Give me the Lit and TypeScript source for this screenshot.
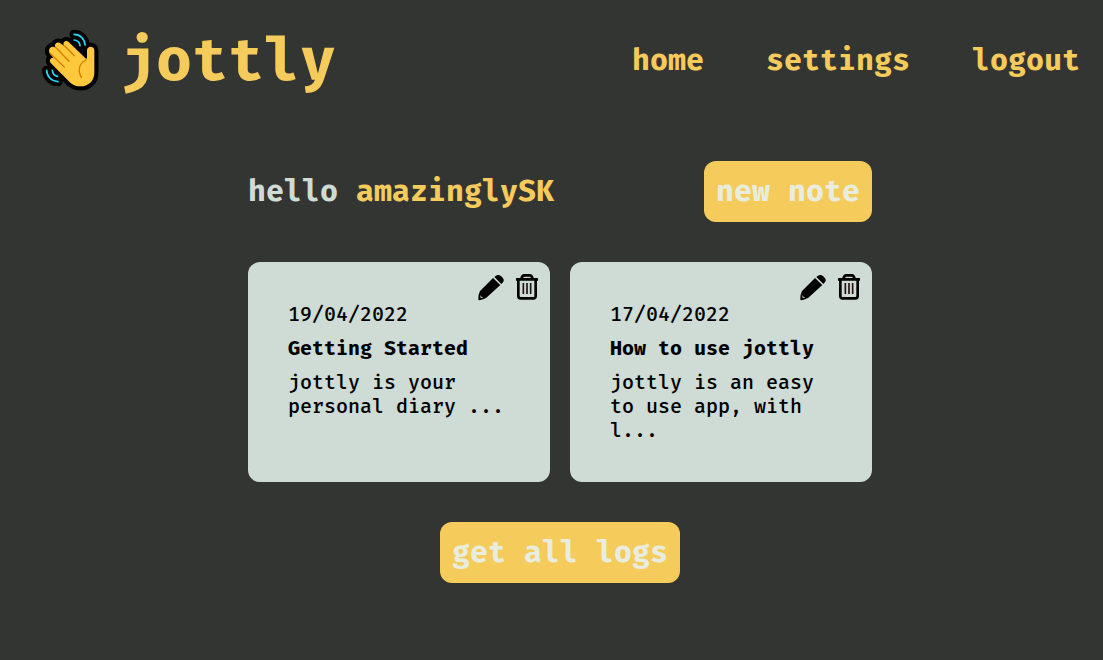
import { LitElement, html, css, svg } from "lit";
import { customElement, property } from "lit/decorators.js";

const handPath =
  "M168 116L116 66C107 58 95 69 103 78L93 71C82 62 69 73 78 84L74 82C63 76 53 89 59 99L70 113C60 112 57 123 63 130L121 188C129 195 139 199 152 199C177 199 193 181 193 158V91C193 77 171 77 171 91V115Z";
const upperArcs = "M132 43C150 43 164 56 165 75M133 60C142 61 149 67 150 77";
const lowerArcs = "M50 151C51 170 64 184 84 185M67 151C68 161 74 168 83 169";

const wave = svg`
  <g fill="none" stroke="#000" stroke-linecap="round" stroke-linejoin="round">
    <path d="${upperArcs}" stroke-width="28" />
    <path d="${lowerArcs}" stroke-width="28" />
    <path d="${handPath}" fill="#000" stroke-width="25" />
  </g>
  <path d="${handPath}" fill="#ffc83d" />
  <g fill="none" stroke-linecap="round">
    <path d="M104 78L133 107M79 84L117 124M60 100L103 141M168 120C150 128 141 148 154 172" stroke="#d67d00" stroke-width="4" />
    <path d="${upperArcs}" stroke="#26d9fc" stroke-width="5" />
    <path d="${lowerArcs}" stroke="#26d9fc" stroke-width="5" />
  </g>
`;

@customElement("note-card")
export class NoteCard extends LitElement {
  @property() date = "";
  @property() heading = "";
  @property() excerpt = "";

  static styles = css`
    :host { display: block; }
    .card {
      box-sizing: border-box;
      height: 100%;
      min-height: 220px;
      padding: 12px 12px 40px 40px;
      border-radius: 12px;
      background: #cfdbd5;
      color: #000;
      font-size: 20px;
      line-height: 24px;
    }
    .actions { display: flex; justify-content: flex-end; gap: 12px; height: 28px; }
    .action { padding: 0; border: 0; background: none; height: 26px; cursor: pointer; color: inherit; }
    .icon { display: block; overflow: visible; }
    .body { display: flex; flex-direction: column; gap: 10px; padding-right: 28px; }
    .heading, .excerpt { margin: 0; font-size: inherit; }
  `;

  render() {
    return html`
      <article class="card">
        <div class="actions">
          <button class="action" aria-label="Edit note">
            <svg class="icon" width="26" height="26" viewBox="24 27 78 78">
              <path d="M69 39L91 60L49 98Q41 103 28 106Q24 106 25 101Q25 88 30 78ZM73 36L78 32Q85 27 93 33Q103 42 101 48Q99 52 94 57Z" />
              <path d="M32 90L34 95L40 97L34 99L31 97Z" fill="#cfdbd5" />
            </svg>
          </button>
          <button class="action" aria-label="Delete note">
            <svg class="icon" width="22" height="26" viewBox="138 27 66 78" fill="none" stroke="currentColor" stroke-width="8">
              <path d="M138 43H204M154 42Q156 31 163 31H179Q186 31 188 42M145 43V93Q145 100 152 100H190Q197 100 197 93V43" />
              <path d="M160 54V87M171 54V87M182 54V87" stroke="#24110c" stroke-width="5" />
            </svg>
          </button>
        </div>
        <div class="body">
          <time>${this.date}</time>
          <h2 class="heading">${this.heading}</h2>
          <p class="excerpt">${this.excerpt}</p>
        </div>
      </article>
    `;
  }
}

@customElement("app-root")
export class AppRoot extends LitElement {
  private notes = [
    { date: "19/04/2022", heading: "Getting Started", excerpt: "jottly is your personal diary ..." },
    { date: "17/04/2022", heading: "How to use jottly", excerpt: "jottly is an easy to use app, with l..." },
  ];

  static styles = css`
    :host {
      display: block;
      box-sizing: border-box;
      min-height: 100vh;
      padding: 24px 23px 40px 40px;
      background: #333533;
      color: #cfdbd5;
      font-family: "Fira Mono", "DejaVu Sans Mono", monospace;
      font-size: 30px;
      line-height: 36px;
      font-weight: 700;
    }
    .header { display: flex; align-items: center; justify-content: space-between; }
    .brand { display: flex; align-items: center; gap: 20px; color: #f5cb5c; }
    .logo { display: block; overflow: visible; }
    .title { margin: 0; font-size: 60px; line-height: 72px; }
    .nav { display: flex; gap: 62px; }
    .link { color: #f5cb5c; text-decoration: none; }
    .main { width: 60%; margin: 65px auto 0; display: flex; flex-direction: column; gap: 40px; }
    .bar { display: flex; align-items: baseline; justify-content: space-between; }
    .greeting { margin: 0; font-size: inherit; }
    .user { color: #f5cb5c; }
    .button {
      padding: 12px;
      border: 0;
      border-radius: 12px;
      background: #f5cb5c;
      color: #e8eddf;
      font: inherit;
      line-height: 37px;
      cursor: pointer;
    }
    .more { align-self: center; }
    .notes { display: grid; grid-template-columns: 1fr 1fr; gap: 20px; font-weight: 500; }
  `;

  render() {
    return html`
      <header class="header">
        <div class="brand">
          <svg class="logo" width="60" height="60" viewBox="30 30 180 180" aria-hidden="true">${wave}</svg>
          <h1 class="title">jottly</h1>
        </div>
        <nav class="nav">
          <a class="link" href="#home">home</a>
          <a class="link" href="#settings">settings</a>
          <a class="link" href="#logout">logout</a>
        </nav>
      </header>
      <main class="main">
        <div class="bar">
          <p class="greeting">hello <span class="user">amazinglySK</span></p>
          <button class="button">new note</button>
        </div>
        <section class="notes">
          ${this.notes.map((n) => html`<note-card .date=${n.date} .heading=${n.heading} .excerpt=${n.excerpt}></note-card>`)}
        </section>
        <button class="button more">get all logs</button>
      </main>
    `;
  }
}
